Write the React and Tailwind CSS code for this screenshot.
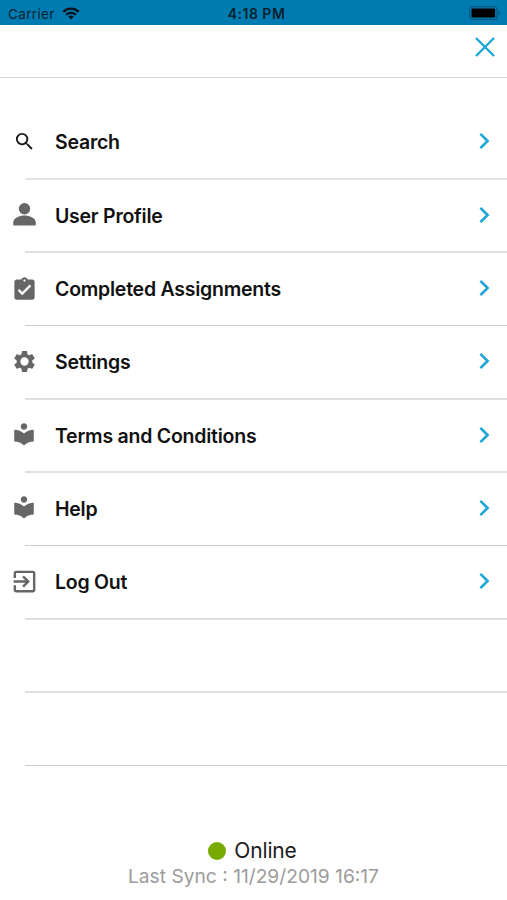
import {
  MdAssignmentTurnedIn,
  MdExitToApp,
  MdLocalLibrary,
  MdSearch,
} from "react-icons/md";

function PersonIcon({ className }) {
  return (
    <svg width="23" height="23" viewBox="0 0 23 23" fill="currentColor" className={className}>
      <circle cx="11.5" cy="5.8" r="5.7" />
      <path d="M.3 22.4v-3.1c0-4.4 6.6-6.7 11.2-6.7s11.2 2.3 11.2 6.7v3.1z" />
    </svg>
  );
}

function GearIcon({ className }) {
  return (
    <svg width="25" height="25" viewBox="0 0 24 24" fill="currentColor" className={className}>
      <path
        fillRule="evenodd"
        d="M19.43 12.98c.04-.32.07-.64.07-.98s-.03-.66-.07-.98l2.11-1.65c.19-.15.24-.42.12-.64l-2-3.46c-.12-.22-.39-.3-.61-.22l-2.49 1c-.52-.4-1.08-.73-1.69-.98l-.38-2.65C14.46 2.18 14.25 2 14 2h-4c-.25 0-.46.18-.49.42l-.38 2.65c-.61.25-1.17.59-1.69.98l-2.49-1c-.23-.09-.49 0-.61.22l-2 3.46c-.13.22-.07.49.12.64l2.11 1.65c-.04.32-.07.65-.07.98s.03.66.07.98l-2.11 1.65c-.19.15-.24.42-.12.64l2 3.46c.12.22.39.3.61.22l2.49-1c.52.4 1.08.73 1.69.98l.38 2.65c.03.24.24.42.49.42h4c.25 0 .46-.18.49-.42l.38-2.65c.61-.25 1.17-.59 1.69-.98l2.49 1c.23.09.49 0 .61-.22l2-3.46c.12-.22.07-.49-.12-.64l-2.11-1.65zM12 16a4 4 0 1 1 0-8 4 4 0 0 1 0 8z"
      />
    </svg>
  );
}

const menuItems = [
  { label: "Search", icon: MdSearch, iconClass: "size-[23px] mb-[3px] text-[#1c1c1c]", row: "h-[75px] border-b-2 border-[#e4e4e4]" },
  { label: "User Profile", icon: PersonIcon, iconClass: "mb-[4px] text-[#666666]", row: "h-[73px] border-b-2 border-[#e0e0e0]" },
  { label: "Completed Assignments", icon: MdAssignmentTurnedIn, iconClass: "size-[27px] mb-[1px] text-[#666666]", row: "h-[73px] border-b border-[#cccccc]" },
  { label: "Settings", icon: GearIcon, iconClass: "mb-[4px] text-[#666666]", row: "h-[74px] border-b-2 border-[#e0e0e0]" },
  { label: "Terms and Conditions", icon: MdLocalLibrary, iconClass: "size-[26px] mb-[5px] text-[#666666]", row: "h-[73px] border-b-2 border-[#e0e0e0]" },
  { label: "Help", icon: MdLocalLibrary, iconClass: "size-[26px] mb-[5px] text-[#666666]", row: "h-[73px] border-b border-[#cccccc]" },
  { label: "Log Out", icon: MdExitToApp, iconClass: "size-[29px] mb-[4px] text-[#666666]", row: "h-[74px] border-b-2 border-[#e0e0e0]" },
];

function StatusBar() {
  return (
    <div className="grid h-[25px] grid-cols-3 items-center bg-[#007bb1] pt-[3px] text-[#06222f]">
      <div className="flex items-center gap-[7px] pl-2">
        <span className="text-[13.5px] leading-4 tracking-[0.35px]">Carrier</span>
        <svg width="18" height="13" viewBox="0 0 18 13" fill="none" className="mb-0.5 text-[#02141d]">
          <path d="M1.3 4.8a11 11 0 0 1 15.4 0" stroke="currentColor" strokeWidth="2.4" />
          <path d="M4.1 7.8a7 7 0 0 1 9.8 0" stroke="currentColor" strokeWidth="2.2" />
          <path d="M9 12.4 6.3 9.8a4 4 0 0 1 5.4 0z" fill="currentColor" />
        </svg>
      </div>
      <span className="pl-1.5 text-center text-[14px] font-semibold leading-4 tracking-[0.5px]">4:18 PM</span>
      <div className="flex justify-end pb-0.5 pr-[6px]">
        <svg width="32" height="14" viewBox="0 0 32 14">
          <rect x="0.6" y="0.6" width="27.4" height="12.8" rx="3" fill="none" stroke="#045a80" strokeWidth="1.2" />
          <rect x="2.5" y="2.4" width="23.6" height="9.2" rx="1" fill="#000000" />
          <path d="M29.3 4.5c2.2.8 2.2 4.2 0 5z" fill="#045a80" />
        </svg>
      </div>
    </div>
  );
}

function MenuRow({ item }) {
  const Icon = item.icon;

  return (
    <li className="flex">
      <div className="flex w-[25px] shrink-0 items-center">
        <div className="ml-2 flex w-8 shrink-0 justify-center">
          <Icon className={`shrink-0 ${item.iconClass}`} />
        </div>
      </div>
      <div className={`flex flex-1 items-center justify-between pl-[30px] pr-[16px] ${item.row}`}>
        <span className="text-[19.5px] font-semibold leading-6 tracking-[-0.24px] text-[#111111]">
          {item.label}
        </span>
        <svg width="13" height="18" viewBox="0 0 13 18" fill="none" className="mb-[2px]">
          <path d="M2.4 1.8 9.6 9l-7.2 7.2" stroke="#1ba5d6" strokeWidth="2.6" />
        </svg>
      </div>
    </li>
  );
}

function App() {
  return (
    <div className="flex h-[900px] w-[507px] flex-col overflow-hidden bg-white font-['Inter',sans-serif]">
      <StatusBar />

      <header className="flex h-[53px] shrink-0 items-center justify-end border-b border-[#d4d4d4] pb-2 pr-3">
        <button aria-label="Close">
          <svg width="20" height="20" viewBox="0 0 20 20" fill="none">
            <path d="M1 1l18 18M19 1L1 19" stroke="#1ba5d6" strokeWidth="2.3" />
          </svg>
        </button>
      </header>

      <ul className="pt-[27px]">
        {menuItems.map((item) => (
          <MenuRow key={item.label} item={item} />
        ))}
        <li className="ml-[25px] h-[73px] border-b-2 border-[#e0e0e0]" />
        <li className="ml-[25px] h-[73px] border-b border-[#cccccc]" />
      </ul>

      <footer className="flex flex-col items-center pt-[72px]">
        <div className="flex items-center gap-2 pr-[2px]">
          <span className="mb-px size-[18px] rounded-full bg-[#77ab00]" />
          <span className="text-[21px] leading-[26px] tracking-[-0.15px] text-[#1c1c1c]">Online</span>
        </div>
        <p className="text-[19.2px] leading-6 text-[#9b9b9b]">Last Sync : 11/29/2019 16:17</p>
      </footer>
    </div>
  );
}

export default App;
